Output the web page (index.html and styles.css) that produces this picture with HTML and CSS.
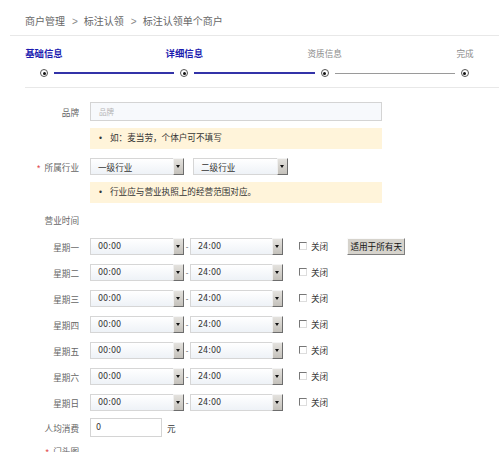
FILE: index.html
```html
<!DOCTYPE html>
<html lang="zh-CN">
<head>
  <meta charset="UTF-8" />
  <title>标注认领单个商户</title>
  <link rel="stylesheet" href="styles.css">
</head>
<body>
  <div class="crumb">商户管理<span class="sep">&gt;</span>标注认领<span class="sep">&gt;</span>标注认领单个商户</div>

  <div class="steps">
    <div class="step-labels">
      <span class="on">基础信息</span>
      <span class="on">详细信息</span>
      <span>资质信息</span>
      <span>完成</span>
    </div>
    <div class="track">
      <i class="dot"></i><b class="line on"></b>
      <i class="dot"></i><b class="line on"></b>
      <i class="dot"></i><b class="line"></b>
      <i class="dot"></i>
    </div>
  </div>

  <div class="form">
    <div class="row first">
      <label class="label">品牌</label>
      <div class="input wide"><span class="ph">品牌</span></div>
    </div>
    <div class="tip"><span class="dotb">•</span>如：麦当劳，个体户可不填写</div>

    <div class="row r-sel">
      <label class="label"><em>*</em> 所属行业</label>
      <div class="select"><span>一级行业</span><i class="arrow"></i></div>
      <div class="select sel2"><span>二级行业</span><i class="arrow"></i></div>
    </div>
    <div class="tip"><span class="dotb">•</span>行业应与营业执照上的经营范围对应。</div>

    <div class="row r-title">
      <label class="label title">营业时间</label>
    </div>

    <div class="row day first-day">
      <label class="label">星期一</label>
      <div class="select"><span class="num">00:00</span><i class="arrow"></i></div>
      <span class="dash">-</span>
      <div class="select to"><span class="num">24:00</span><i class="arrow"></i></div>
      <span class="check"><i class="box"></i>关闭</span>
      <button class="apply">适用于所有天</button>
    </div>
    <div class="row day">
      <label class="label">星期二</label>
      <div class="select"><span class="num">00:00</span><i class="arrow"></i></div>
      <span class="dash">-</span>
      <div class="select to"><span class="num">24:00</span><i class="arrow"></i></div>
      <span class="check"><i class="box"></i>关闭</span>
    </div>
    <div class="row day">
      <label class="label">星期三</label>
      <div class="select"><span class="num">00:00</span><i class="arrow"></i></div>
      <span class="dash">-</span>
      <div class="select to"><span class="num">24:00</span><i class="arrow"></i></div>
      <span class="check"><i class="box"></i>关闭</span>
    </div>
    <div class="row day">
      <label class="label">星期四</label>
      <div class="select"><span class="num">00:00</span><i class="arrow"></i></div>
      <span class="dash">-</span>
      <div class="select to"><span class="num">24:00</span><i class="arrow"></i></div>
      <span class="check"><i class="box"></i>关闭</span>
    </div>
    <div class="row day">
      <label class="label">星期五</label>
      <div class="select"><span class="num">00:00</span><i class="arrow"></i></div>
      <span class="dash">-</span>
      <div class="select to"><span class="num">24:00</span><i class="arrow"></i></div>
      <span class="check"><i class="box"></i>关闭</span>
    </div>
    <div class="row day">
      <label class="label">星期六</label>
      <div class="select"><span class="num">00:00</span><i class="arrow"></i></div>
      <span class="dash">-</span>
      <div class="select to"><span class="num">24:00</span><i class="arrow"></i></div>
      <span class="check"><i class="box"></i>关闭</span>
    </div>
    <div class="row day">
      <label class="label">星期日</label>
      <div class="select"><span class="num">00:00</span><i class="arrow"></i></div>
      <span class="dash">-</span>
      <div class="select to"><span class="num">24:00</span><i class="arrow"></i></div>
      <span class="check"><i class="box"></i>关闭</span>
    </div>

    <div class="row r-price">
      <label class="label">人均消费</label>
      <div class="input short"><span class="num">0</span></div>
      <span class="unit">元</span>
    </div>

    <div class="row r-photo">
      <label class="label"><em>*</em> 门头图</label>
    </div>
  </div>
</body>
</html>
```

FILE: styles.css
```css
body {
  margin: 0;
  background: #fff;
  font-family: "Liberation Sans", "Noto Sans CJK SC", sans-serif;
  font-size: 8.6px;
  color: #333;
}
.crumb {
  margin-left: 10px;
  padding: 14px 0 5px 15px;
  line-height: 16px;
  font-size: 10px;
  color: #666;
  border-bottom: 1px solid #e8e8e8;
}
.crumb .sep {
  margin: 0 6px 0 7px;
  color: #888;
}
.steps {
  margin-left: 25px;
  padding: 12px 0 10px;
  border-bottom: 1px solid #e8e8e8;
}
.step-labels {
  display: flex;
  justify-content: space-between;
  width: 459px;
  line-height: 12px;
}
.step-labels span {
  width: 38px;
  text-align: center;
  color: #8a8a8a;
  white-space: nowrap;
}
.step-labels span.on {
  color: #1c1cb0;
  font-weight: bold;
  font-size: 9.4px;
}
.track {
  display: flex;
  align-items: center;
  margin: 9px 0 0 15px;
  width: 429px;
  height: 8px;
}
.dot {
  position: relative;
  width: 6px;
  height: 6px;
  border: 1px solid #555;
  border-radius: 50%;
  background: #fff;
  flex: none;
}
.dot::after {
  content: "";
  position: absolute;
  left: 1.5px;
  top: 1.5px;
  width: 3px;
  height: 3px;
  border-radius: 50%;
  background: #111;
}
.line {
  flex: 1;
  height: 1px;
  margin: 0 6px;
  background: #9a9a9a;
}
.line.on {
  height: 2px;
  background: #3333a8;
}
.form {
  padding-bottom: 20px;
}
.row {
  display: flex;
  align-items: center;
  margin-top: 9px;
}
.row.first {
  margin-top: 14px;
}
.label {
  width: 79px;
  margin-right: 11px;
  text-align: right;
  color: #666;
  flex: none;
  white-space: nowrap;
}
.label em {
  font-style: normal;
  color: #e0393e;
  margin-right: 2px;
}
.input {
  box-sizing: border-box;
  height: 19px;
  border: 1px solid #d4d4d4;
  background: #f7f9fc;
  display: flex;
  align-items: center;
  padding-left: 8px;
}
.input.wide {
  width: 292px;
}
.input.short {
  width: 72px;
  background: #fff;
  padding-left: 5px;
}
.ph {
  color: #b5b5b5;
  font-size: 7.5px;
}
.tip {
  box-sizing: border-box;
  width: 292px;
  height: 21px;
  margin: 7px 0 0 90px;
  padding-left: 9px;
  line-height: 21px;
  background: #fff4da;
  color: #333;
}
.tip .dotb {
  display: inline-block;
  width: 11px;
}
.select {
  box-sizing: border-box;
  position: relative;
  width: 94px;
  height: 17px;
  border: 1px solid #d6d6d6;
  background: linear-gradient(#fff, #eef2f7);
  padding-left: 7px;
  display: flex;
  align-items: center;
  color: #333;
}
.select.sel2 {
  margin-left: 9px;
  width: 95px;
}
.select.to {
  width: 93px;
}
.arrow {
  position: absolute;
  right: -1px;
  top: -1px;
  box-sizing: border-box;
  width: 11px;
  height: 17px;
  background: linear-gradient(#e4e2de, #c4c1bb);
  border-top: 1px solid #f4f4f4;
  border-left: 1px solid #f0f0f0;
  border-right: 1px solid #6d6d6d;
  border-bottom: 1px solid #6d6d6d;
}
.arrow::after {
  content: "";
  position: absolute;
  left: 2px;
  top: 6px;
  border-left: 2.5px solid transparent;
  border-right: 2.5px solid transparent;
  border-top: 3px solid #111;
}
.num {
  font-family: "DejaVu Sans", sans-serif;
  font-size: 8px;
  color: #333;
}
.r-sel {
  margin-top: 9px;
}
.r-title {
  height: 16px;
}
.day {
  margin-top: 9px;
}
.first-day {
  margin-top: 10px;
}
.dash {
  width: 6px;
  text-align: center;
  color: #555;
  font-size: 8px;
}
.check {
  display: flex;
  align-items: center;
  margin-left: 16px;
  line-height: 12px;
  color: #333;
}
.box {
  box-sizing: border-box;
  width: 8px;
  height: 8px;
  margin: -2px 4px 0 0;
  background: #fff;
  border-top: 1px solid #777;
  border-left: 1px solid #777;
  border-right: 1px solid #ddd;
  border-bottom: 1px solid #ddd;
}
.apply {
  margin-left: 19px;
  height: 17px;
  width: 58px;
  padding: 0;
  font-family: "Noto Sans CJK SC", sans-serif;
  font-size: 8.6px;
  line-height: 15px;
  color: #111;
  background: #d6d3cc;
  border: 1px solid;
  border-color: #fafafa #7e7e7e #7e7e7e #fafafa;
}
.r-price {
  margin-top: 7px;
}
.unit {
  margin-left: 5px;
  color: #333;
}
.r-photo {
  margin-top: 8px;
}
```
